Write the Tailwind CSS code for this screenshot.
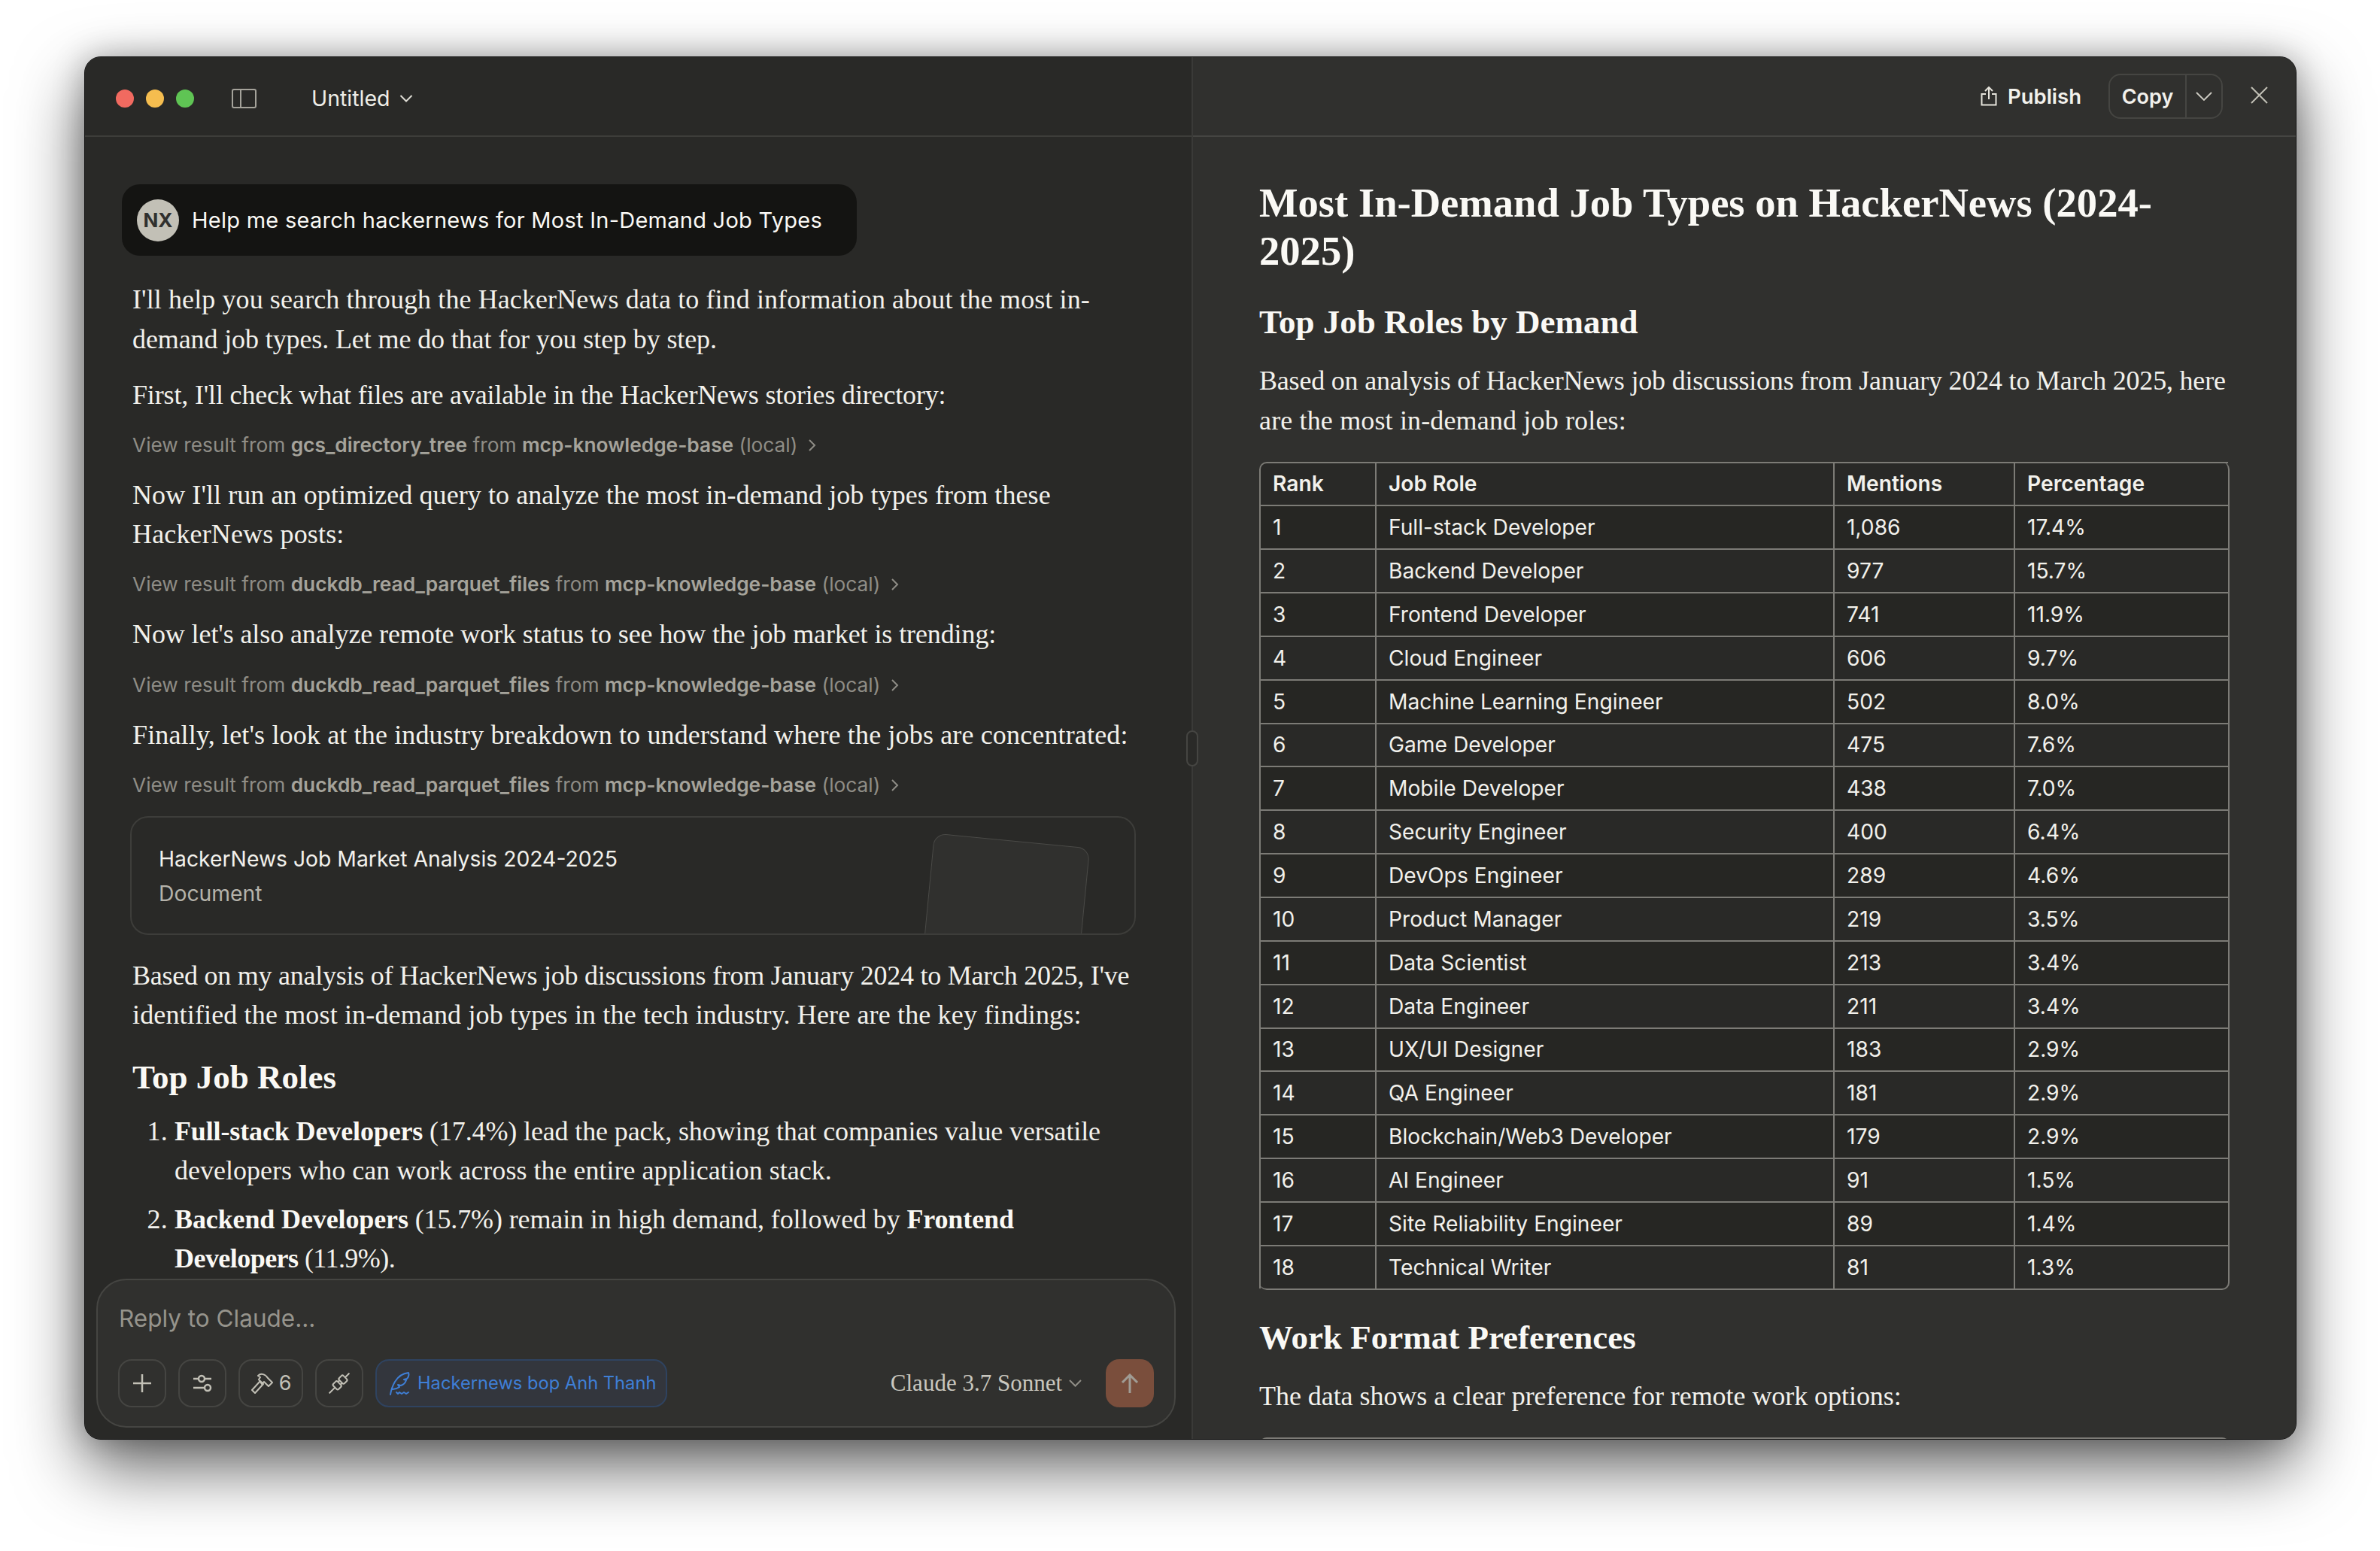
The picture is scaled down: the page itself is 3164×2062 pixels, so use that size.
<!DOCTYPE html>
<html lang="en">
<head>
    <meta charset="UTF-8">
    <title>Untitled</title>
    <script src="https://cdn.jsdelivr.net/npm/@tailwindcss/browser@4"></script>
</head>
<body class="bg-white w-[3164px] h-[2062px] overflow-hidden pt-[75px] pl-[112px] font-['Inter',sans-serif]">

    <div class="relative w-[2941px] h-[1839px] flex rounded-[22px] overflow-hidden border border-[#111] bg-[#292927] shadow-[0_36px_90px_rgba(0,0,0,0.62),0_0_40px_rgba(0,0,0,0.25),inset_0_0_0_1.5px_#555553] text-[#faf9f5]">

        <!-- chat side -->
        <section class="relative w-[1473px] shrink-0 flex flex-col bg-[#292927] border-r-2 border-[#3a3a38]">
            <header class="h-[106px] shrink-0 border-b-2 border-[#3d3d3a] flex items-center pl-[41px] pt-[6px]">
                <span class="w-[24px] h-[24px] rounded-full bg-[#f16a60]"></span>
                <span class="w-[24px] h-[24px] rounded-full bg-[#f5bd4f] ml-[16px]"></span>
                <span class="w-[24px] h-[24px] rounded-full bg-[#5fc454] ml-[16px]"></span>
                <svg class="ml-[50px]" width="33" height="26" viewBox="0 0 33 26" fill="none" stroke="#a5a39b" stroke-width="2"><rect x="1" y="1" width="31" height="24" rx="2"/><path d="M12 1v24"/></svg>
                <span class="ml-[73px] text-[28.500px] text-[#eeede7]">Untitled</span>
                <svg class="ml-[12px]" width="18" height="12" viewBox="0 0 18 12" fill="none" stroke="#dedcd4" stroke-width="2"><path d="M1.500 2l7.500 7.500L16.500 2"/></svg>
            </header>

            <div class="flex-1 overflow-hidden pl-[49px] pt-[63px]">
                <div class="w-[977px] h-[95px] rounded-[24px] bg-[#141412] flex items-center pl-[20px]">
                    <span class="w-[56px] h-[56px] rounded-full bg-[#c2c0b6] text-[#30302e] font-bold text-[26px] flex items-center justify-center">NX</span>
                    <span class="ml-[17px] text-[29px] tracking-[0.26px] text-[#faf9f5]">Help me search hackernews for Most In-Demand Job Types</span>
                </div>

                <div class="pl-[14px] mt-[32px] font-['Liberation_Serif',serif] text-[36px] tracking-[0.15px] leading-[52.500px] text-[#f2f1ec] whitespace-nowrap">
                    <p><span class="tracking-[0.1px]">I'll help you search through the HackerNews data to find information about the most in-</span><br><span class="tracking-[-0.11px]">demand job types. Let me do that for you step by step.</span></p>
                    <p class="mt-[22px] tracking-[-0.16px]">First, I'll check what files are available in the HackerNews stories directory:</p>
                    <p class="mt-[14px] font-['Inter',sans-serif] text-[26.300px] tracking-normal leading-[52px] text-[#8f8d86]">View result from <b class="font-semibold text-[#a5a39b]">gcs_directory_tree</b> from <b class="font-semibold text-[#a5a39b]">mcp-knowledge-base</b> (local) <svg class="inline ml-[6px] mb-[3px]" width="12" height="18" viewBox="0 0 12 18" fill="none" stroke="#8f8d86" stroke-width="2"><path d="M2 2l7 7-7 7"/></svg></p>
                    <p class="mt-[14px]"><span class="tracking-[0.08px]">Now I'll run an optimized query to analyze the most in-demand job types from these</span><br>HackerNews posts:</p>
                    <p class="mt-[14px] font-['Inter',sans-serif] text-[26.300px] tracking-normal leading-[52px] text-[#8f8d86]">View result from <b class="font-semibold text-[#a5a39b]">duckdb_read_parquet_files</b> from <b class="font-semibold text-[#a5a39b]">mcp-knowledge-base</b> (local) <svg class="inline ml-[6px] mb-[3px]" width="12" height="18" viewBox="0 0 12 18" fill="none" stroke="#8f8d86" stroke-width="2"><path d="M2 2l7 7-7 7"/></svg></p>
                    <p class="mt-[14px] tracking-[-0.1px]">Now let's also analyze remote work status to see how the job market is trending:</p>
                    <p class="mt-[16px] font-['Inter',sans-serif] text-[26.300px] tracking-normal leading-[52px] text-[#8f8d86]">View result from <b class="font-semibold text-[#a5a39b]">duckdb_read_parquet_files</b> from <b class="font-semibold text-[#a5a39b]">mcp-knowledge-base</b> (local) <svg class="inline ml-[6px] mb-[3px]" width="12" height="18" viewBox="0 0 12 18" fill="none" stroke="#8f8d86" stroke-width="2"><path d="M2 2l7 7-7 7"/></svg></p>
                    <p class="mt-[14px]">Finally, let's look at the industry breakdown to understand where the jobs are concentrated:</p>
                    <p class="mt-[14px] font-['Inter',sans-serif] text-[26.300px] tracking-normal leading-[52px] text-[#8f8d86]">View result from <b class="font-semibold text-[#a5a39b]">duckdb_read_parquet_files</b> from <b class="font-semibold text-[#a5a39b]">mcp-knowledge-base</b> (local) <svg class="inline ml-[6px] mb-[3px]" width="12" height="18" viewBox="0 0 12 18" fill="none" stroke="#8f8d86" stroke-width="2"><path d="M2 2l7 7-7 7"/></svg></p>

                    <div class="relative -ml-[3px] mt-[15px] w-[1337px] h-[158px] rounded-[24px] border-2 border-[#3d3d3a] overflow-hidden font-['Inter',sans-serif] tracking-normal pl-[36px] pt-[32px]">
                        <div class="text-[28.300px] leading-[46px] text-[#f2f1ec]">HackerNews Job Market Analysis 2024-2025</div>
                        <div class="text-[28.300px] leading-[46px] text-[#b5b3ab]">Document</div>
                        <div class="absolute left-[1056px] top-[30px] w-[208px] h-[220px] rotate-[5.5deg] rounded-[16px] bg-[#30302e] border border-[#4a4a47]"></div>
                    </div>

                    <p class="mt-[28px]"><span class="tracking-[-0.25px]">Based on my analysis of HackerNews job discussions from January 2024 to March 2025, I've</span><br>identified the most in-demand job types in the tech industry. Here are the key findings:</p>
                    <h2 class="mt-[30px] text-[45px] tracking-normal leading-[52px] font-bold text-[#faf9f5]">Top Job Roles</h2>
                    <ol class="mt-[20px] pl-[56px] list-decimal">
                        <li><span class="tracking-[-0.13px]"><b class="text-[#faf9f5]">Full-stack Developers</b> (17.4%) lead the pack, showing that companies value versatile</span><br><span class="tracking-[0.02px]">developers who can work across the entire application stack.</span></li>
                        <li class="mt-[12px]"><span class="tracking-[-0.12px]"><b class="text-[#faf9f5]">Backend Developers</b> (15.7%) remain in high demand, followed by <b class="text-[#faf9f5]">Frontend</b></span><br><span class="tracking-[-0.55px]"><b class="text-[#faf9f5]">Developers</b> (11.9%).</span></li>
                    </ol>
                </div>
            </div>

            <!-- composer floats over the scrolled text -->
            <div class="absolute left-[15px] top-[1624px] w-[1435px] h-[198px] rounded-[40px] bg-[#30302e] border-2 border-[#454542]">
                <div class="pl-[28px] pt-[28px] text-[31.500px] leading-[46px] text-[#96948c]">Reply to Claude...</div>
                <div class="flex items-center pl-[27px] mt-[31px] h-[64px]">
                    <button class="w-[64px] h-[64px] rounded-[18px] border-2 border-[#454542] flex items-center justify-center">
                        <svg width="24" height="24" viewBox="0 0 24 24" stroke="#c2c0b6" stroke-width="2.500"><path d="M12 0v24M0 12h24"/></svg>
                    </button>
                    <button class="ml-[16px] w-[64px] h-[64px] rounded-[18px] border-2 border-[#454542] flex items-center justify-center">
                        <svg width="26" height="24" viewBox="0 0 26 24" fill="none" stroke="#c2c0b6" stroke-width="2.500"><path d="M1 6h7M16 6h9M1 18h15M24 18h1"/><circle cx="12" cy="6" r="4"/><circle cx="20" cy="18" r="4"/></svg>
                    </button>
                    <button class="ml-[16px] w-[86px] h-[64px] rounded-[18px] border-2 border-[#454542] flex items-center justify-center gap-[8px] text-[27px] text-[#c2c0b6]">
                        <svg width="30" height="28" viewBox="0 0 30 28" fill="none" stroke="#c2c0b6" stroke-width="2" stroke-linejoin="round"><path d="M2 23L13 11l4 4L6 27z"/><path d="M10 4c4-4 10-2 13 3l6 6-5 5-6-6-3 3-4-6 2-3z"/></svg>
                        <span>6</span>
                    </button>
                    <button class="ml-[16px] w-[64px] h-[64px] rounded-[18px] border-2 border-[#454542] flex items-center justify-center">
                        <svg width="28" height="28" viewBox="0 0 28 28" fill="none" stroke="#c2c0b6" stroke-width="2" stroke-linejoin="round"><g transform="rotate(45 14 14)"><path d="M14-5V3M11.500 11v3M16.500 11v3M14 22v11"/><rect x="9" y="3" width="10" height="8" rx="2"/><rect x="9" y="14" width="10" height="8" rx="2"/></g></svg>
                    </button>
                    <div class="ml-[16px] w-[388px] h-[64px] rounded-[18px] bg-[#33363d] border-2 border-[#2f4360] flex items-center pl-[16px] text-[#3f7fd6] text-[23.700px] whitespace-nowrap">
                        <svg width="30" height="32" viewBox="0 0 30 32" fill="none" stroke="#3f7fd6" stroke-width="2" stroke-linejoin="round" stroke-linecap="round"><path d="M2 31c1-6 3-12 6-17 3-5 8-11 18-12 1 3 0 6-2 8l-4 1 3 1c-1 3-4 6-7 7l-4-1 2 3c-3 2-6 3-9 3"/><path d="M10 28l2 2 2-2 3 2 3-2 3 2 3-2"/></svg>
                        <span class="ml-[8px]">Hackernews bop Anh Thanh</span>
                    </div>
                    <div class="ml-[auto] flex items-center font-['Liberation_Serif',serif] text-[31px] text-[#c9c7bf]">Claude 3.7 Sonnet
                        <svg class="ml-[9px]" width="17" height="10" viewBox="0 0 17 10" fill="none" stroke="#8f8d86" stroke-width="2"><path d="M1 1l7.500 7.500L16 1"/></svg>
                    </div>
                    <button class="ml-[32px] mr-[27px] w-[64px] h-[64px] rounded-[18px] bg-[#7a4e3c] flex items-center justify-center">
                        <svg width="24" height="26" viewBox="0 0 24 26" fill="none" stroke="#a09c95" stroke-width="3"><path d="M12 26V2M2 12L12 2l10 10"/></svg>
                    </button>
                </div>
            </div>
        </section>

        <!-- document side -->
        <section class="flex-1 flex flex-col bg-[#30302e] relative">
            <header class="h-[106px] shrink-0 border-b-2 border-[#454542] flex items-center justify-end">
                <svg width="22" height="26" viewBox="0 0 22 26" fill="none" stroke="#e6e4dc" stroke-width="2"><path d="M7 10H1.500v14.500h19V10H15M11 17V1.500M6 6l5-5 5 5"/></svg>
                <span class="ml-[14px] pt-[2px] text-[27.500px] font-semibold text-[#f2f1ec]">Publish</span>
                <div class="ml-[36px] w-[152px] h-[60px] rounded-[16px] border-2 border-[#454542] flex items-center">
                    <span class="w-[100px] pt-[2px] text-center text-[27px] font-semibold text-[#f2f1ec]">Copy</span>
                    <span class="h-full border-l-2 border-[#454542] flex-1 flex items-center justify-center">
                        <svg width="22" height="12" viewBox="0 0 22 12" fill="none" stroke="#d0cec6" stroke-width="1.800"><path d="M1 1l10 10L21 1"/></svg>
                    </span>
                </div>
                <svg class="ml-[37px] mr-[37px] mb-[4px]" width="23" height="23" viewBox="0 0 23 23" stroke="#c2c0b6" stroke-width="2"><path d="M1 1l21 21M22 1L1 22"/></svg>
            </header>

            <div class="flex-1 overflow-hidden pl-[88px] font-['Liberation_Serif',serif] whitespace-nowrap">
                <h1 class="mt-[56px] text-[54.600px] leading-[64px] font-bold text-[#faf9f5]">Most In-Demand Job Types on HackerNews (2024-<br>2025)</h1>
                <h2 class="mt-[36px] text-[45px] leading-[52px] font-bold text-[#faf9f5]">Top Job Roles by Demand</h2>
                <p class="mt-[26px] text-[36px] tracking-[0.15px] leading-[52.500px] text-[#f2f1ec]"><span class="tracking-[-0.2px]">Based on analysis of HackerNews job discussions from January 2024 to March 2025, here</span><br>are the most in-demand job roles:</p>

                <table class="mt-[29px] w-[1290px] table-fixed border-separate border-spacing-0 font-['Inter',sans-serif] text-[28.200px] text-[#f2f1ec] bg-[#292927] rounded-[10px] border-r-2 border-b-2 border-[#7c7b76] [&_td]:border-t-2 [&_td]:border-l-2 [&_td]:border-[#7c7b76] [&_td]:pl-[16px] [&_th]:border-t-2 [&_th]:border-l-2 [&_th]:border-[#7c7b76] [&_th]:pl-[16px] [&_th]:text-left [&_th]:font-semibold [&_tbody_tr:nth-child(odd)]:bg-[#262623]">
                    <thead>
                        <tr class="h-[57px]"><th class="w-[154px] rounded-tl-[10px]">Rank</th><th class="w-[609px]">Job Role</th><th class="w-[240px]">Mentions</th><th>Percentage</th></tr>
                    </thead>
                    <tbody>
                        <tr class="h-[58px]"><td>1</td><td>Full-stack Developer</td><td>1,086</td><td>17.4%</td></tr>
                        <tr class="h-[58px]"><td>2</td><td>Backend Developer</td><td>977</td><td>15.7%</td></tr>
                        <tr class="h-[58px]"><td>3</td><td>Frontend Developer</td><td>741</td><td>11.9%</td></tr>
                        <tr class="h-[58px]"><td>4</td><td>Cloud Engineer</td><td>606</td><td>9.7%</td></tr>
                        <tr class="h-[58px]"><td>5</td><td>Machine Learning Engineer</td><td>502</td><td>8.0%</td></tr>
                        <tr class="h-[57px]"><td>6</td><td>Game Developer</td><td>475</td><td>7.6%</td></tr>
                        <tr class="h-[58px]"><td>7</td><td>Mobile Developer</td><td>438</td><td>7.0%</td></tr>
                        <tr class="h-[58px]"><td>8</td><td>Security Engineer</td><td>400</td><td>6.4%</td></tr>
                        <tr class="h-[58px]"><td>9</td><td>DevOps Engineer</td><td>289</td><td>4.6%</td></tr>
                        <tr class="h-[58px]"><td>10</td><td>Product Manager</td><td>219</td><td>3.5%</td></tr>
                        <tr class="h-[58px]"><td>11</td><td>Data Scientist</td><td>213</td><td>3.4%</td></tr>
                        <tr class="h-[58px]"><td>12</td><td>Data Engineer</td><td>211</td><td>3.4%</td></tr>
                        <tr class="h-[57px]"><td>13</td><td>UX/UI Designer</td><td>183</td><td>2.9%</td></tr>
                        <tr class="h-[58px]"><td>14</td><td>QA Engineer</td><td>181</td><td>2.9%</td></tr>
                        <tr class="h-[58px]"><td>15</td><td>Blockchain/Web3 Developer</td><td>179</td><td>2.9%</td></tr>
                        <tr class="h-[58px]"><td>16</td><td>AI Engineer</td><td>91</td><td>1.5%</td></tr>
                        <tr class="h-[58px]"><td>17</td><td>Site Reliability Engineer</td><td>89</td><td>1.4%</td></tr>
                        <tr class="h-[58px]"><td>18</td><td>Technical Writer</td><td>81</td><td>1.3%</td></tr>
                    </tbody>
                </table>

                <h2 class="mt-[37px] text-[45px] leading-[52px] font-bold text-[#faf9f5]">Work Format Preferences</h2>
                <p class="mt-[26px] text-[36px] tracking-[-0.05px] leading-[52.500px] text-[#f2f1ec]">The data shows a clear preference for remote work options:</p>
                <div class="mt-[28px] w-[1290px] h-[40px] rounded-t-[10px] bg-[#292927] border-t-2 border-x-2 border-[#7c7b76] flex">
                    <span class="w-[560px] border-r-2 border-[#7c7b76]"></span>
                    <span class="w-[332px] border-r-2 border-[#7c7b76]"></span>
                </div>
            </div>

            <!-- panel resize grip -->
            <span class="absolute -left-[9px] top-[895px] w-[16px] h-[48px] rounded-[8px] bg-[#2a2a28] border-2 border-[#454542]"></span>
        </section>
    </div>

</body>
</html>
